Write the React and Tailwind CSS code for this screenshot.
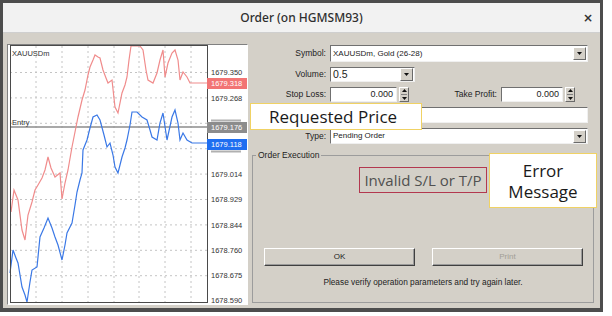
import React from 'react';

const redLine = "11,212 14,190 18,200 22,230 25,240 28,215 32,202 35,190 38,185 42,178 45,170 48,157 51,168 55,177 60,173 62,199 65,183 68,170 72,147 75,132 78,117 82,100 85,90 88,75 90,67 93,60 95,55 98,57 100,58 103,70 106,78 108,83 112,80 115,107 118,113 122,93 125,85 127,77 129,60 131,46 140,46 143,50 146,70 148,80 153,83 157,73 160,60 163,50 165,77 168,63 172,53 175,50 178,60 180,80 183,72 187,77 190,83 207,83";
const blueLine = "10,273 13,250 16,258 18,263 22,287 25,295 27,302 30,282 32,270 37,267 40,237 44,228 48,218 52,228 55,237 58,245 62,260 65,245 67,233 72,223 75,205 77,192 80,180 82,173 83,150 87,140 90,128 93,117 97,115 100,120 104,135 107,147 110,143 113,155 115,167 118,173 122,157 125,148 127,140 130,125 132,112 137,112 142,117 147,120 150,130 152,137 157,140 160,123 163,113 167,140 172,117 175,110 178,123 180,140 183,133 187,140 192,143 207,143";

const gridY = [72.5, 97.9, 123.3, 148.7, 174.1, 199.5, 224.9, 250.3, 275.7];
const gridX = [36, 62, 88, 114, 139, 165, 191];
const prices = [
  ['1679.350', 72.5], ['1679.268', 97.9],
  ['1679.014', 174.1], ['1678.929', 199.5], ['1678.844', 224.9], ['1678.760', 250.3],
  ['1678.675', 275.7], ['1678.590', 300],
];

const Chart = () => (
  <svg width="239" height="259" viewBox="8 45 239 259" className="block">
    <rect x="8" y="45" width="239" height="259" fill="#fff" />
    {gridY.map((y) => (
      <line key={y} x1="10" x2="207" y1={y} y2={y} stroke="#c4c4c4" strokeWidth="1" strokeDasharray="2 3" />
    ))}
    {gridX.map((x) => (
      <line key={x} x1={x} x2={x} y1="46" y2="302" stroke="#c4c4c4" strokeWidth="1" strokeDasharray="2 3" />
    ))}
    <line x1="10" x2="207" y1="127" y2="127" stroke="#8c8c8c" strokeWidth="1.5" />
    <polyline points={redLine} fill="none" stroke="#f08c8c" strokeWidth="1.2" />
    <polyline points={blueLine} fill="none" stroke="#3a78e6" strokeWidth="1.2" />
    <rect x="10.5" y="45.5" width="197" height="257" fill="none" stroke="#4a4a4a" strokeWidth="1" />
    <g fontFamily="Liberation Sans, Arial, sans-serif" fontSize="7.5" fill="#333">
      <text x="12" y="56">XAUUSDm</text>
      <text x="12" y="125">Entry</text>
      {prices.map(([p, y]) => (
        <text key={p} x="211" y={y + 2.7}>{p}</text>
      ))}
    </g>
    {/* partly hidden scale ticks behind the markers */}
    <rect x="211" y="119.5" width="30" height="2" fill="#b0b0b0" />
    <rect x="211" y="150.5" width="30" height="2" fill="#b0b0b0" />
    <rect x="207" y="78" width="41" height="11" fill="#f27474" />
    <rect x="207" y="122" width="41" height="11" fill="#8c8c8c" />
    <rect x="207" y="139" width="41" height="11" fill="#1f6ef0" />
    <g fontFamily="Liberation Sans, Arial, sans-serif" fontSize="7.5" fill="#fff">
      <text x="211" y="86.3">1679.318</text>
      <text x="211" y="130.3">1679.176</text>
      <text x="211" y="147.3">1679.118</text>
    </g>
  </svg>
);

const DropBtn = () => (
  <div className="w-[13px] h-[13px] mr-[1px] bg-[#d4d0c8] border border-t-white border-l-white border-b-[#6a6a6a] border-r-[#6a6a6a] flex items-center justify-center">
    <svg width="5" height="3" viewBox="0 0 5 3"><path d="M0 0h5L2.5 3z" fill="#111" /></svg>
  </div>
);

const Spinner = () => (
  <div className="w-[10px] h-[15px] bg-[#d4d0c8] border border-t-white border-l-white border-b-[#6a6a6a] border-r-[#6a6a6a] flex flex-col items-center justify-center gap-[2px]">
    <svg width="5" height="3" viewBox="0 0 5 3"><path d="M0 3h5L2.5 0z" fill="#111" /></svg>
    <div className="w-[6px] h-px bg-[#808080]" />
    <svg width="5" height="3" viewBox="0 0 5 3"><path d="M0 0h5L2.5 3z" fill="#111" /></svg>
  </div>
);

const field = "bg-white border border-t-[#707070] border-l-[#707070] border-b-[#f0f0f0] border-r-[#f0f0f0] flex items-center h-full";

const Label = ({ children, w = 'w-[74px]' }) => (
  <div className={`${w} text-right text-[8.5px] text-[#222] shrink-0`}>{children}</div>
);

const App = () => {
  return (
    <div className="relative w-[612px] h-[316px] bg-white overflow-hidden font-['Liberation_Sans',Arial,sans-serif]">
      <div className="w-[603px] h-[312px] border-x-[3px] border-t-[3px] border-b-4 border-[#4d4d4d] flex flex-col">
        {/* title bar */}
        <div className="h-[30px] shrink-0 bg-[#f2f2f2] border-b border-[#cfcfcf] grid grid-cols-[1fr_auto_1fr] items-center">
          <div />
          <div className="font-['Noto_Sans',sans-serif] text-[12px] font-medium text-[#2e2e2e]">Order (on HGMSM93)</div>
          <div className="justify-self-end mr-[7px] font-['DejaVu_Sans',sans-serif] text-[12px] font-bold text-[#333]">×</div>
        </div>

        <div className="flex-1 bg-[#d4d0c8] flex">
          {/* chart */}
          <div className="ml-[4px] mt-[11px] w-[241px] h-[261px] border border-t-[#808080] border-l-[#808080] border-r-white border-b-white">
            <Chart />
          </div>

          {/* form */}
          <div className="ml-[4px] w-[344px] pt-[12px] flex flex-col">
            <div className="flex items-center gap-[4px] h-[17px]">
              <Label>Symbol:</Label>
              <div className={`${field} w-[258px] justify-between`}>
                <span className="pl-[2px] text-[8px] text-[#222]">XAUUSDm, Gold (26-28)</span>
                <DropBtn />
              </div>
            </div>

            <div className="flex items-center gap-[4px] h-[15px] mt-[5px]">
              <Label>Volume:</Label>
              <div className={`${field} w-[85px] justify-between`}>
                <span className="pl-[2px] text-[10.5px] text-[#222]">0.5</span>
                <DropBtn />
              </div>
            </div>

            <div className="flex items-center h-[15px] mt-[5px]">
              <Label>Stop Loss:</Label>
              <div className={`${field} w-[67px] ml-[4px] justify-end`}>
                <span className="pr-[3px] text-[9px] text-[#222]">0.000</span>
              </div>
              <div className="ml-[2px]"><Spinner /></div>
              <Label w="w-[88px]">Take Profit:</Label>
              <div className={`${field} w-[62px] ml-[4px] justify-end`}>
                <span className="pr-[3px] text-[9px] text-[#222]">0.000</span>
              </div>
              <div className="ml-[2px]"><Spinner /></div>
            </div>

            <div className="flex items-center gap-[4px] h-[16px] mt-[5px]">
              <Label />
              <div className={`${field} w-[258px]`} />
            </div>

            <div className="flex items-center gap-[4px] h-[16px] mt-[5px]">
              <Label>Type:</Label>
              <div className={`${field} w-[258px] justify-between`}>
                <span className="pl-[2px] text-[8px] text-[#222]">Pending Order</span>
                <DropBtn />
              </div>
            </div>

            <fieldset className="mt-[5px] mb-[5px] w-[342px] flex-1 border border-[#9c9c9c] flex flex-col items-center">
              <legend className="ml-[3px] px-[2px] text-[8.5px] leading-[12px] text-[#222]">Order Execution</legend>
              <div className="mt-[6px] h-[26px] px-[4px] border border-[#b3384f] flex items-center font-['Open_Sans',sans-serif] text-[15px] text-[#505050]">
                Invalid S/L or T/P
              </div>
              <div className="mt-[55px] w-full pl-[11px] flex gap-[17px]">
                <div className="w-[151px] h-[18px] bg-[#d4d0c8] border border-t-white border-l-white border-b-[#404040] border-r-[#404040] shadow-[inset_-1px_-1px_0_#9a9a9a] flex items-center justify-center text-[8px] text-[#222]">OK</div>
                <div className="w-[151px] h-[18px] bg-[#d4d0c8] border border-t-white border-l-white border-b-[#404040] border-r-[#404040] shadow-[inset_-1px_-1px_0_#9a9a9a] flex items-center justify-center text-[8px] text-[#a29e96]">Print</div>
              </div>
              <div className="mt-[10px] text-[8.3px] text-[#222]">Please verify operation parameters and try again later.</div>
            </fieldset>
          </div>
        </div>
      </div>

      {/* callouts */}
      <div className="absolute left-[250px] top-[103px] w-[172px] h-[27px] bg-white border-[1.5px] border-[#f0d264] flex items-center pl-[18px] font-['Open_Sans',sans-serif] text-[17px] text-[#1a1a1a]">
        Requested Price
      </div>
      <div className="absolute left-[489px] top-[153px] w-[108px] h-[55px] bg-white border-[1.5px] border-[#f0d264] flex flex-col items-center justify-center font-['Open_Sans',sans-serif] text-[17px] leading-[21px] text-[#1a1a1a]">
        <span>Error</span>
        <span>Message</span>
      </div>
    </div>
  );
};

export default App;
